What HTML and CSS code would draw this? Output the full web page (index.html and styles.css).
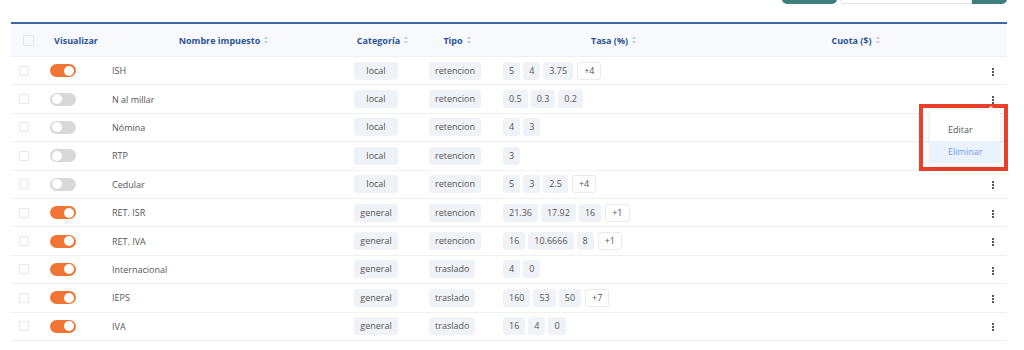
FILE: index.html
```html
<!DOCTYPE html>
<html lang="es">
<head>
  <meta charset="UTF-8">
  <title>Impuestos</title>
  <link rel="stylesheet" href="styles.css">
</head>
<body>
  <div class="page">
    <div class="toolbar">
      <button class="btn-teal btn-wide"></button>
      <div class="search">
        <input type="text">
        <button class="btn-teal btn-search"></button>
      </div>
    </div>

    <div class="table-wrap">
      <table class="taxes">
        <colgroup>
          <col style="width:29px">
          <col style="width:70px">
          <col style="width:236px">
          <col style="width:74px">
          <col style="width:75px">
          <col style="width:238px">
          <col style="width:246px">
          <col style="width:28px">
        </colgroup>
        <thead>
          <tr>
            <th class="col-check"><span class="check head-check"></span></th>
            <th class="col-vis">Visualizar</th>
            <th class="col-name"><span class="sortable">Nombre impuesto <i class="sort"></i></span></th>
            <th><span class="sortable">Categoría <i class="sort"></i></span></th>
            <th><span class="sortable">Tipo <i class="sort"></i></span></th>
            <th><span class="sortable">Tasa (%) <i class="sort"></i></span></th>
            <th><span class="sortable">Cuota ($) <i class="sort"></i></span></th>
            <th></th>
          </tr>
        </thead>
        <tbody>
          <tr>
            <td class="col-check"><span class="check"></span></td>
            <td class="col-vis"><span class="toggle on"></span></td>
            <td class="col-name">ISH</td>
            <td class="col-cat"><span class="tag tag-fixed">local</span></td>
            <td class="col-type"><span class="tag tag-fixed">retencion</span></td>
            <td class="col-rate"><span class="tag">5</span><span class="tag">4</span><span class="tag">3.75</span><span class="tag more">+4</span></td>
            <td></td>
            <td class="col-menu"><span class="dots"></span></td>
          </tr>
          <tr>
            <td class="col-check"><span class="check"></span></td>
            <td class="col-vis"><span class="toggle"></span></td>
            <td class="col-name">N al millar</td>
            <td class="col-cat"><span class="tag tag-fixed">local</span></td>
            <td class="col-type"><span class="tag tag-fixed">retencion</span></td>
            <td class="col-rate"><span class="tag">0.5</span><span class="tag">0.3</span><span class="tag">0.2</span></td>
            <td></td>
            <td class="col-menu"><span class="dots"></span></td>
          </tr>
          <tr>
            <td class="col-check"><span class="check"></span></td>
            <td class="col-vis"><span class="toggle"></span></td>
            <td class="col-name">Nómina</td>
            <td class="col-cat"><span class="tag tag-fixed">local</span></td>
            <td class="col-type"><span class="tag tag-fixed">retencion</span></td>
            <td class="col-rate"><span class="tag">4</span><span class="tag">3</span></td>
            <td></td>
            <td class="col-menu"></td>
          </tr>
          <tr>
            <td class="col-check"><span class="check"></span></td>
            <td class="col-vis"><span class="toggle"></span></td>
            <td class="col-name">RTP</td>
            <td class="col-cat"><span class="tag tag-fixed">local</span></td>
            <td class="col-type"><span class="tag tag-fixed">retencion</span></td>
            <td class="col-rate"><span class="tag">3</span></td>
            <td></td>
            <td class="col-menu"></td>
          </tr>
          <tr>
            <td class="col-check"><span class="check"></span></td>
            <td class="col-vis"><span class="toggle"></span></td>
            <td class="col-name">Cedular</td>
            <td class="col-cat"><span class="tag tag-fixed">local</span></td>
            <td class="col-type"><span class="tag tag-fixed">retencion</span></td>
            <td class="col-rate"><span class="tag">5</span><span class="tag">3</span><span class="tag">2.5</span><span class="tag more">+4</span></td>
            <td></td>
            <td class="col-menu"><span class="dots"></span></td>
          </tr>
          <tr>
            <td class="col-check"><span class="check"></span></td>
            <td class="col-vis"><span class="toggle on"></span></td>
            <td class="col-name">RET. ISR</td>
            <td class="col-cat"><span class="tag tag-fixed">general</span></td>
            <td class="col-type"><span class="tag tag-fixed">retencion</span></td>
            <td class="col-rate"><span class="tag">21.36</span><span class="tag">17.92</span><span class="tag">16</span><span class="tag more">+1</span></td>
            <td></td>
            <td class="col-menu"><span class="dots"></span></td>
          </tr>
          <tr>
            <td class="col-check"><span class="check"></span></td>
            <td class="col-vis"><span class="toggle on"></span></td>
            <td class="col-name">RET. IVA</td>
            <td class="col-cat"><span class="tag tag-fixed">general</span></td>
            <td class="col-type"><span class="tag tag-fixed">retencion</span></td>
            <td class="col-rate"><span class="tag">16</span><span class="tag">10.6666</span><span class="tag">8</span><span class="tag more">+1</span></td>
            <td></td>
            <td class="col-menu"><span class="dots"></span></td>
          </tr>
          <tr>
            <td class="col-check"><span class="check"></span></td>
            <td class="col-vis"><span class="toggle on"></span></td>
            <td class="col-name">Internacional</td>
            <td class="col-cat"><span class="tag tag-fixed">general</span></td>
            <td class="col-type"><span class="tag tag-fixed">traslado</span></td>
            <td class="col-rate"><span class="tag">4</span><span class="tag">0</span></td>
            <td></td>
            <td class="col-menu"><span class="dots"></span></td>
          </tr>
          <tr>
            <td class="col-check"><span class="check"></span></td>
            <td class="col-vis"><span class="toggle on"></span></td>
            <td class="col-name">IEPS</td>
            <td class="col-cat"><span class="tag tag-fixed">general</span></td>
            <td class="col-type"><span class="tag tag-fixed">traslado</span></td>
            <td class="col-rate"><span class="tag">160</span><span class="tag">53</span><span class="tag">50</span><span class="tag more">+7</span></td>
            <td></td>
            <td class="col-menu"><span class="dots"></span></td>
          </tr>
          <tr>
            <td class="col-check"><span class="check"></span></td>
            <td class="col-vis"><span class="toggle on"></span></td>
            <td class="col-name">IVA</td>
            <td class="col-cat"><span class="tag tag-fixed">general</span></td>
            <td class="col-type"><span class="tag tag-fixed">traslado</span></td>
            <td class="col-rate"><span class="tag">16</span><span class="tag">4</span><span class="tag">0</span></td>
            <td></td>
            <td class="col-menu"><span class="dots"></span></td>
          </tr>
        </tbody>
      </table>

      <!-- menu de acciones abierto sobre la fila 2 -->
      <div class="highlight">
        <ul class="menu">
          <li>Editar</li>
          <li class="active">Eliminar</li>
        </ul>
      </div>
    </div>
  </div>
</body>
</html>
```

FILE: styles.css
```css
body {
  margin: 0;
  background: #fff;
  font-family: "Open Sans", "Liberation Sans", sans-serif;
  color: #555;
}

.page {
  width: 996px;
  padding-left: 11px;
}

.toolbar {
  display: flex;
  justify-content: flex-end;
  gap: 3px;
  height: 22px;
}

.btn-teal {
  border: none;
  background: #3f7e7e;
  padding: 0;
}

.btn-wide {
  width: 55px;
  height: 24px;
  margin-top: -20px;
  border-radius: 0 0 5px 5px;
}

.search {
  display: flex;
  margin-top: -20px;
  height: 24px;
}

.search input {
  width: 132px;
  height: 24px;
  box-sizing: border-box;
  border: 1px solid #e3e6ea;
  border-radius: 0 0 0 4px;
  margin: 0;
}

.btn-search {
  width: 35px;
  height: 24px;
  border-radius: 0 0 5px 0;
}

.table-wrap {
  position: relative;
}

.taxes {
  width: 996px;
  table-layout: fixed;
  border-collapse: collapse;
  border-top: 2px solid #3d67a3;
  font-size: 9px;
}

.taxes th {
  height: 32px;
  padding: 0;
  background: #f7f9fc;
  color: #2b5597;
  font-weight: 700;
  text-align: center;
  border-bottom: 1px solid #eef0f3;
}

.taxes td {
  height: 27.4px;
  padding: 0 0 0 8px;
  border-bottom: 1px solid #eef0f3;
  white-space: nowrap;
}

.sortable {
  display: inline-flex;
  align-items: center;
  gap: 4px;
}

.sort {
  display: inline-block;
  width: 5px;
  height: 8px;
  position: relative;
}

.sort::before,
.sort::after {
  content: "";
  position: absolute;
  left: 0;
  border-left: 2.5px solid transparent;
  border-right: 2.5px solid transparent;
}

.sort::before {
  top: 0;
  border-bottom: 3px solid #cfd3d8;
}

.sort::after {
  bottom: 0;
  border-top: 3px solid #cfd3d8;
}

.taxes th.col-name {
  padding-right: 8px;
}

.taxes th.col-check,
.taxes td.col-check {
  padding: 0;
}

.check {
  display: block;
  width: 8px;
  height: 8px;
  border: 1px solid #e6e8eb;
  border-radius: 1px;
  margin-left: 8px;
}

.head-check {
  width: 9px;
  height: 9px;
  margin-left: 12px;
}

.taxes th.col-vis {
  padding-left: 2px;
}

.taxes td.col-vis {
  padding-left: 10px;
}

.toggle {
  display: block;
  width: 26px;
  height: 13px;
  border-radius: 7px;
  background: #d8d8d8;
  position: relative;
}

.toggle::after {
  content: "";
  position: absolute;
  top: 1.5px;
  left: 2px;
  width: 10px;
  height: 10px;
  border-radius: 50%;
  background: #fff;
}

.toggle.on {
  background: #f07433;
}

.toggle.on::after {
  left: auto;
  right: 2px;
}

.taxes td.col-name {
  padding-left: 2px;
  color: #555;
}

.taxes td.col-type {
  padding-left: 9px;
}

.tag {
  display: inline-block;
  height: 18px;
  line-height: 16px;
  padding: 0 5px;
  margin-right: 3px;
  border-radius: 3px;
  background: #eff2f6;
  border: 1px solid #eff2f6;
  box-sizing: border-box;
  color: #555;
  vertical-align: middle;
}

.tag-fixed {
  min-width: 44px;
  text-align: center;
}

.tag.more {
  background: #fff;
  border-color: #e8ebef;
  padding: 0 6px;
  margin-left: 1px;
}

.taxes td.col-menu {
  padding: 0;
  text-align: center;
}

.dots {
  display: inline-block;
  width: 2px;
  height: 2px;
  background: #555;
  vertical-align: middle;
  box-shadow: 0 3px 0 #555, 0 -3px 0 #555;
}

.highlight {
  position: absolute;
  left: 908px;
  top: 82px;
  width: 81px;
  height: 59px;
  border: 4px solid #ea3f2a;
}

.menu {
  list-style: none;
  margin: 2px 0 0 7px;
  padding: 9px 0 3px;
  width: 70px;
  background: #fff;
  border-radius: 3px;
  box-shadow: 0 1px 6px rgba(0, 0, 0, 0.12);
  font-size: 9px;
  position: relative;
}

.menu::before {
  content: "";
  position: absolute;
  top: -4px;
  right: 5px;
  border-left: 4px solid transparent;
  border-right: 4px solid transparent;
  border-bottom: 4px solid #fff;
}

.menu li {
  height: 22px;
  line-height: 22px;
  padding-left: 18px;
  color: #555;
}

.menu li.active {
  background: #eaf2fd;
  color: #6fa0ee;
}
```
